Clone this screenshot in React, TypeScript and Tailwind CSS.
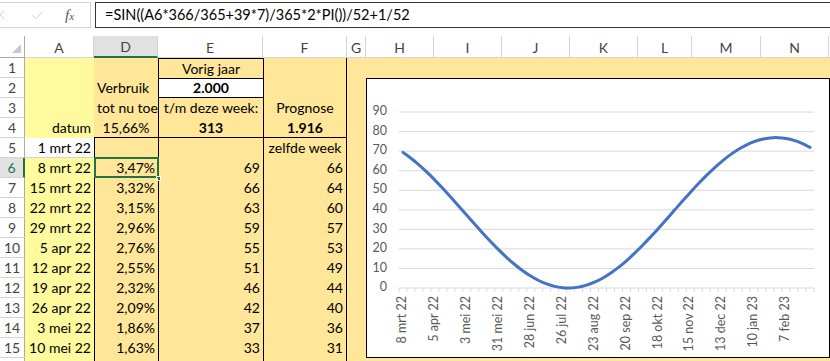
import React from 'react';
import { X, Check } from 'lucide-react';

const YELLOW = 'bg-[#fffa9e]';
const ORANGE = 'bg-[#ffe699]';

type Row = { n: number; date: string; pct: string; prev: string; prog: string };

const rows: Row[] = [
  { n: 6, date: '8 mrt 22', pct: '3,47%', prev: '69', prog: '66' },
  { n: 7, date: '15 mrt 22', pct: '3,32%', prev: '66', prog: '64' },
  { n: 8, date: '22 mrt 22', pct: '3,15%', prev: '63', prog: '60' },
  { n: 9, date: '29 mrt 22', pct: '2,96%', prev: '59', prog: '57' },
  { n: 10, date: '5 apr 22', pct: '2,76%', prev: '55', prog: '53' },
  { n: 11, date: '12 apr 22', pct: '2,55%', prev: '51', prog: '49' },
  { n: 12, date: '19 apr 22', pct: '2,32%', prev: '46', prog: '44' },
  { n: 13, date: '26 apr 22', pct: '2,09%', prev: '42', prog: '40' },
  { n: 14, date: '3 mei 22', pct: '1,86%', prev: '37', prog: '36' },
  { n: 15, date: '10 mei 22', pct: '1,63%', prev: '33', prog: '31' },
  { n: 16, date: '', pct: '', prev: '', prog: '' },
];

const xLabels = [
  '8 mrt 22', '5 apr 22', '3 mei 22', '31 mei 22', '28 jun 22', '26 jul 22', '23 aug 22',
  '20 sep 22', '18 okt 22', '15 nov 22', '13 dec 22', '10 jan 23', '7 feb 23',
];

const RowHead = ({ n, sel }: { n: number; sel?: boolean }) => (
  <div
    className={
      sel
        ? 'w-[25px] shrink-0 h-full flex items-center justify-center bg-[#e1e1e1] text-[#217346] border-r-2 border-r-[#217346] border-b border-b-[#d4d4d4]'
        : 'w-[25px] shrink-0 h-full flex items-center justify-center bg-white text-[#444] border-r border-r-[#ababab] border-b border-b-[#d4d4d4]'
    }
  >
    {/* row 16 is only a sliver at the bottom edge */}
    {n < 16 ? n : null}
  </div>
);

// weekly values from the sheet formula, for the chart
const START = 44628; // 8 mrt 2022 as excel serial
const values = Array.from({ length: 52 }, (_, i) => {
  const a = START + 7 * i;
  return 2000 * (Math.sin(((a * 366) / 365 + 39 * 7) / 365 * 2 * Math.PI) / 52 + 1 / 52);
});

const Chart = () => {
  const left = 32;
  const right = 447;
  const y0 = 209;
  const step = (right - left) / 52;
  const yScale = 1.955;
  const pts = values.map((v, i) => ({ x: left + (i + 0.5) * step, y: y0 - v * yScale }));

  let d = `M${pts[0].x},${pts[0].y}`;
  for (let i = 0; i < pts.length - 1; i++) {
    const p0 = pts[i - 1] || pts[i];
    const p1 = pts[i];
    const p2 = pts[i + 1];
    const p3 = pts[i + 2] || p2;
    const c1x = p1.x + (p2.x - p0.x) / 6;
    const c1y = p1.y + (p2.y - p0.y) / 6;
    const c2x = p2.x - (p3.x - p1.x) / 6;
    const c2y = p2.y - (p3.y - p1.y) / 6;
    d += ` C${c1x},${c1y} ${c2x},${c2y} ${p2.x},${p2.y}`;
  }

  return (
    <div className="absolute left-[366px] top-[78px] w-[464px] h-[280px] bg-white border border-black">
      <svg width="462" height="278" className="block text-[12.5px]" fill="#595959">
        {/* gridlines + y labels */}
        {[0, 10, 20, 30, 40, 50, 60, 70, 80, 90].map((v) => (
          <g key={v}>
            <line x1={left} x2={right} y1={y0 - v * yScale} y2={y0 - v * yScale} stroke="#d9d9d9" strokeWidth="1" />
            <text x={20} y={y0 - v * yScale} textAnchor="end" dominantBaseline="middle">
              {v}
            </text>
          </g>
        ))}
        {/* ticks */}
        {Array.from({ length: 53 }, (_, k) => (
          <line key={k} x1={left + k * step} x2={left + k * step} y1={y0} y2={y0 + 4} stroke="#d9d9d9" strokeWidth="1" />
        ))}
        {/* x labels */}
        {xLabels.map((l, j) => {
          const x = left + (j * 4 + 0.5) * step;
          return (
            <text key={l} transform={`translate(${x},${y0 + 8}) rotate(-90)`} textAnchor="end" dominantBaseline="middle">
              {l}
            </text>
          );
        })}
        <path d={d} fill="none" stroke="#4472c4" strokeWidth="3" strokeLinecap="round" />
      </svg>
    </div>
  );
};

export default function App() {
  return (
    <div className="relative w-[830px] h-[361px] overflow-hidden bg-white font-[Lato,sans-serif] text-[14px] text-black leading-none">
      {/* formula bar */}
      <div className="h-[36px] flex items-start pt-[2px]">
        <div className="w-[91px] h-[26px] flex items-center border-y border-r border-[#d4d4d4] text-[#c8c8c8]">
          <X className="w-[14px] h-[14px] -ml-[7px]" strokeWidth={1.5} />
          <Check className="w-[15px] h-[15px] ml-[23px]" strokeWidth={1.5} />
          <span className="ml-[20px] italic font-[Liberation_Serif,serif] text-[15px] text-[#555]">
            f<span className="text-[11px]">x</span>
          </span>
        </div>
        <div className="ml-[4px] flex-1 h-[26px] flex items-center border border-r-0 border-[#333] bg-white pl-[9px] text-[14.5px]">
          =SIN((A6*366/365+39*7)/365*2*PI())/52+1/52
        </div>
      </div>

      {/* column headers */}
      <div className="flex h-[22px] text-[#444]">
        <div className="w-[25px] shrink-0 flex items-end justify-end pr-[3px] pb-[4px] border-r border-b border-[#ababab]">
          <div className="w-0 h-0 border-l-[9px] border-l-transparent border-b-[9px] border-b-[#c9c9c9]" />
        </div>
        <div className="w-[69px] shrink-0 flex items-center justify-center pt-[2px] border-r border-b border-[#d4d4d4]">A</div>
        <div className="w-[64px] shrink-0 flex items-center justify-center pt-[2px] bg-[#e1e1e1] text-[#2b4f3a] border-r border-r-[#d4d4d4] border-b-2 border-b-[#217346]">D</div>
        <div className="w-[105px] shrink-0 flex items-center justify-center pt-[2px] border-r border-b border-[#d4d4d4]">E</div>
        <div className="w-[84px] shrink-0 flex items-center justify-center pt-[2px] border-r border-b border-[#d4d4d4]">F</div>
        <div className="w-[19px] shrink-0 flex items-center justify-center pt-[2px] border-r border-b border-[#d4d4d4]">G</div>
        <div className="w-[68px] shrink-0 flex items-center justify-center pt-[2px] border-r border-b border-[#d4d4d4]">H</div>
        <div className="w-[68px] shrink-0 flex items-center justify-center pt-[2px] border-r border-b border-[#d4d4d4]">I</div>
        <div className="w-[68px] shrink-0 flex items-center justify-center pt-[2px] border-r border-b border-[#d4d4d4]">J</div>
        <div className="w-[68px] shrink-0 flex items-center justify-center pt-[2px] border-r border-b border-[#d4d4d4]">K</div>
        <div className="w-[54px] shrink-0 flex items-center justify-center pt-[2px] border-r border-b border-[#d4d4d4]">L</div>
        <div className="w-[69px] shrink-0 flex items-center justify-center pt-[2px] border-r border-b border-[#d4d4d4]">M</div>
        <div className="w-[68px] shrink-0 flex items-center justify-center pt-[2px] border-r border-b border-[#d4d4d4]">N</div>
        <div className="flex-1 border-b border-[#d4d4d4]" />
      </div>

      {/* row 1 */}
      <div className="flex h-5">
        <RowHead n={1} />
        <div className={`w-[69px] shrink-0 ${YELLOW}`} />
        <div className={`w-[64px] shrink-0 ${ORANGE}`} />
        <div className={`w-[105px] shrink-0 flex items-center justify-center border-l border-t border-black ${ORANGE}`}>Vorig jaar</div>
        <div className={`w-[84px] shrink-0 border-x border-black ${ORANGE}`} />
        <div className={`flex-1 ${ORANGE}`} />
      </div>
      {/* row 2 */}
      <div className="flex h-5">
        <RowHead n={2} />
        <div className={`w-[69px] shrink-0 ${YELLOW}`} />
        <div className={`w-[64px] shrink-0 flex items-center pl-[3px] ${ORANGE}`}>Verbruik</div>
        <div className="w-[105px] shrink-0 flex items-center justify-center border-l border-y border-black bg-white font-bold">2.000</div>
        <div className={`w-[84px] shrink-0 border-x border-black ${ORANGE}`} />
        <div className={`flex-1 ${ORANGE}`} />
      </div>
      {/* row 3 */}
      <div className="flex h-5">
        <RowHead n={3} />
        <div className={`w-[69px] shrink-0 ${YELLOW}`} />
        <div className={`w-[64px] shrink-0 flex items-center pl-[3px] whitespace-nowrap ${ORANGE}`}>tot nu toe</div>
        <div className={`w-[105px] shrink-0 flex items-center justify-center border-l border-black whitespace-nowrap ${ORANGE}`}>t/m deze week:</div>
        <div className={`w-[84px] shrink-0 flex items-center justify-center border-x border-black ${ORANGE}`}>Prognose</div>
        <div className={`flex-1 ${ORANGE}`} />
      </div>
      {/* row 4 */}
      <div className="flex h-5">
        <RowHead n={4} />
        <div className={`w-[69px] shrink-0 flex items-center justify-end pr-[3px] ${YELLOW}`}>datum</div>
        <div className={`w-[64px] shrink-0 flex items-center justify-center border-b border-black ${ORANGE}`}>15,66%</div>
        <div className={`w-[105px] shrink-0 flex items-center justify-center border-l border-b border-black font-bold ${ORANGE}`}>313</div>
        <div className={`w-[84px] shrink-0 flex items-center justify-center border-x border-b border-black font-bold ${ORANGE}`}>1.916</div>
        <div className={`flex-1 ${ORANGE}`} />
      </div>
      {/* row 5 */}
      <div className="flex h-5">
        <RowHead n={5} />
        <div className="w-[69px] shrink-0 flex items-center justify-end pr-[3px] bg-white border-b border-[#d4d4d4]">1 mrt 22</div>
        <div className={`w-[64px] shrink-0 border-l border-black ${ORANGE}`} />
        <div className={`w-[105px] shrink-0 border-l border-black ${ORANGE}`} />
        <div className={`w-[84px] shrink-0 flex items-center justify-center border-x border-black whitespace-nowrap ${ORANGE}`}>zelfde week</div>
        <div className={`flex-1 ${ORANGE}`} />
      </div>
      {/* rows 6+ */}
      {rows.map((r) => (
        <div key={r.n} className="flex h-5">
          <RowHead n={r.n} sel={r.n === 6} />
          <div className={`w-[69px] shrink-0 flex items-center justify-end pr-[3px] ${YELLOW}`}>{r.date}</div>
          <div className={`relative w-[64px] shrink-0 flex items-center justify-end pr-[3px] border-l border-black ${ORANGE}`}>
            {r.pct}
            {r.n === 6 && (
              <>
                <div className="absolute -left-px -top-px w-[65px] h-[21px] border-2 border-[#217346]" />
                <div className="absolute -right-[3px] -bottom-[3px] w-[5px] h-[5px] bg-[#217346] border border-white" />
              </>
            )}
          </div>
          <div className={`w-[105px] shrink-0 flex items-center justify-end pr-[3px] border-l border-black ${ORANGE}`}>{r.prev}</div>
          <div className={`w-[84px] shrink-0 flex items-center justify-end pr-[3px] border-x border-black ${ORANGE}`}>{r.prog}</div>
          <div className={`flex-1 ${ORANGE}`} />
        </div>
      ))}

      <Chart />
    </div>
  );
}
